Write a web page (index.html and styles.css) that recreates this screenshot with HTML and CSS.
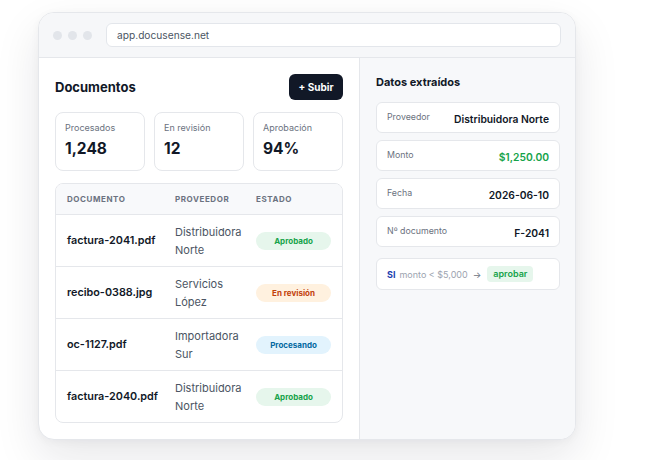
FILE: index.html
```html
<!DOCTYPE html>
<html lang="es">
<head>
<meta charset="utf-8">
<title>DocuSense</title>
<link rel="stylesheet" href="styles.css">
</head>
<body>
<div class="stage">
  <div class="window">
    <div class="chrome">
      <div class="dots"><span></span><span></span><span></span></div>
      <div class="url">app.docusense.net</div>
    </div>
    <div class="body">
      <section class="main">
        <div class="head">
          <h1>Documentos</h1>
          <button class="btn">+ Subir</button>
        </div>
        <div class="stats">
          <div class="stat"><div class="stat-label">Procesados</div><div class="stat-value">1,248</div></div>
          <div class="stat"><div class="stat-label">En revisión</div><div class="stat-value">12</div></div>
          <div class="stat"><div class="stat-label">Aprobación</div><div class="stat-value">94%</div></div>
        </div>
        <div class="table">
          <div class="row thead">
            <div>Documento</div><div>Proveedor</div><div>Estado</div>
          </div>
          <div class="row">
            <div class="doc">factura-2041.pdf</div>
            <div class="prov">Distribuidora Norte</div>
            <div><span class="badge ok">Aprobado</span></div>
          </div>
          <div class="row">
            <div class="doc">recibo-0388.jpg</div>
            <div class="prov">Servicios López</div>
            <div><span class="badge rev">En revisión</span></div>
          </div>
          <div class="row">
            <div class="doc">oc-1127.pdf</div>
            <div class="prov">Importadora Sur</div>
            <div><span class="badge proc">Procesando</span></div>
          </div>
          <div class="row">
            <div class="doc">factura-2040.pdf</div>
            <div class="prov">Distribuidora Norte</div>
            <div><span class="badge ok">Aprobado</span></div>
          </div>
        </div>
      </section>
      <aside class="side">
        <h2>Datos extraídos</h2>
        <div class="fields">
          <div class="field"><span class="f-label">Proveedor</span><span class="f-value">Distribuidora Norte</span></div>
          <div class="field"><span class="f-label">Monto</span><span class="f-value money">$1,250.00</span></div>
          <div class="field"><span class="f-label">Fecha</span><span class="f-value">2026-06-10</span></div>
          <div class="field"><span class="f-label">Nº documento</span><span class="f-value">F-2041</span></div>
        </div>
        <div class="rule">
          <span class="if">SI</span>
          <span class="cond">monto &lt; $5,000</span>
          <span class="arrow">→</span>
          <span class="action">aprobar</span>
        </div>
      </aside>
    </div>
  </div>
</div>
</body>
</html>
```
FILE: styles.css
```css
* { box-sizing: border-box; }

html, body {
  margin: 0;
  background: #ffffff;
  font-family: Inter, "Noto Sans", sans-serif;
  color: #111827;
}

.stage {
  width: 660px;
  height: 460px;
  padding: 12px 0 0 38px;
  overflow: hidden;
}

.window {
  width: 538px;
  height: 428px;
  background: #ffffff;
  border: 1px solid #e5e7eb;
  border-radius: 16px;
  overflow: hidden;
  box-shadow: 0 18px 45px rgba(15, 23, 42, 0.10), 0 2px 8px rgba(15, 23, 42, 0.04);
  display: flex;
  flex-direction: column;
}

/* browser chrome */
.chrome {
  height: 45px;
  flex: none;
  background: #f6f7f9;
  border-bottom: 1px solid #e5e7eb;
  display: flex;
  align-items: center;
  padding: 0 14px 0 14px;
  gap: 14px;
}
.dots { display: flex; gap: 6px; }
.dots span {
  width: 9px;
  height: 9px;
  border-radius: 50%;
  background: #e2e5ea;
}
.url {
  flex: 1;
  height: 24px;
  background: #ffffff;
  border: 1px solid #e3e6eb;
  border-radius: 6px;
  font-size: 10.2px;
  color: #4b5563;
  line-height: 22px;
  padding-left: 10px;
}

.body {
  flex: 1;
  display: flex;
  min-height: 0;
}

/* left panel */
.main {
  width: 320px;
  flex: none;
  padding: 16px 16px 0 16px;
}
.head {
  display: flex;
  justify-content: space-between;
  align-items: center;
  height: 26px;
}
h1 {
  margin: 0;
  font-size: 13px;
  font-weight: 700;
  color: #111827;
}
.btn {
  height: 26px;
  width: 54px;
  border: 0;
  border-radius: 6px;
  background: #111827;
  color: #ffffff;
  font-family: inherit;
  font-size: 10px;
  font-weight: 700;
  padding: 0;
}

.stats {
  margin-top: 12px;
  display: grid;
  grid-template-columns: repeat(3, 1fr);
  gap: 9px;
}
.stat {
  height: 59px;
  border: 1px solid #e5e7eb;
  border-radius: 8px;
  padding: 9px 9px;
}
.stat-label {
  font-size: 9px;
  color: #6b7280;
  line-height: 12px;
}
.stat-value {
  margin-top: 5px;
  font-size: 15.5px;
  font-weight: 700;
  line-height: 20px;
  color: #111827;
}

.table {
  margin-top: 12px;
  border: 1px solid #e5e7eb;
  border-radius: 8px;
  overflow: hidden;
}
.row {
  display: grid;
  grid-template-columns: 108px 81px 1fr;
  align-items: center;
  padding: 0 11px;
  height: 52px;
  border-top: 1px solid #e5e7eb;
}
.row.thead {
  height: 30px;
  border-top: 0;
  background: #f8f9fb;
  font-size: 8px;
  font-weight: 700;
  letter-spacing: 0.07em;
  text-transform: uppercase;
  color: #6b7280;
}
.doc {
  font-size: 10.8px;
  font-weight: 600;
  color: #111827;
}
.prov {
  font-size: 11px;
  line-height: 18px;
  color: #4b5563;
  padding-right: 6px;
}
.badge {
  display: block;
  width: 75px;
  height: 18px;
  border-radius: 9px;
  font-size: 8px;
  font-weight: 700;
  line-height: 18px;
  text-align: center;
}
.badge.ok { background: #e6f6ec; color: #16a34a; }
.badge.rev { background: #fff1df; color: #c2410c; }
.badge.proc { background: #e2f3fd; color: #0369a1; }

/* right panel */
.side {
  flex: 1;
  background: #f7f8fa;
  border-left: 1px solid #e5e7eb;
  padding: 16px 15px 0 16px;
}
h2 {
  margin: 0;
  font-size: 11px;
  font-weight: 700;
  line-height: 16px;
  color: #111827;
}
.fields {
  margin-top: 12px;
  display: flex;
  flex-direction: column;
  gap: 7px;
}
.field {
  height: 31px;
  background: #ffffff;
  border: 1px solid #e5e7eb;
  border-radius: 6px;
  padding: 0 10px;
  display: flex;
  justify-content: space-between;
  align-items: center;
}
.f-label {
  font-size: 8.8px;
  color: #6b7280;
  align-self: flex-start;
  margin-top: 8px;
}
.f-value {
  font-size: 10.3px;
  font-weight: 600;
  color: #111827;
  margin-top: 2px;
}
.f-value.money { color: #16a34a; }

.rule {
  margin-top: 11px;
  height: 32px;
  background: #ffffff;
  border: 1px solid #e5e7eb;
  border-radius: 6px;
  padding: 0 10px;
  display: flex;
  align-items: center;
  font-size: 9px;
}
.if { font-weight: 700; color: #1e40af; margin-right: 4px; }
.cond { color: #9ca3af; margin-right: 5px; }
.arrow { color: #6b7280; margin-right: 6px; }
.action {
  background: #e6f6ec;
  color: #16a34a;
  font-weight: 600;
  padding: 0 6px;
  height: 16px;
  line-height: 16px;
  border-radius: 4px;
  font-size: 9px;
}
```
